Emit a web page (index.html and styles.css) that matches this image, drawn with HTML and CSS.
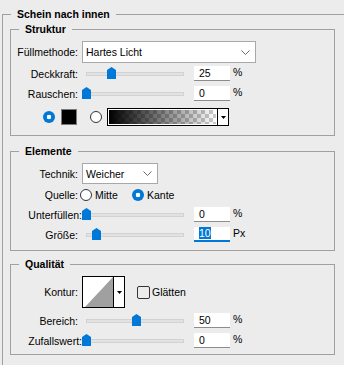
FILE: index.html
```html
<!DOCTYPE html>
<html lang="de">
<head>
  <meta charset="UTF-8">
  <title>Schein nach innen</title>
  <link rel="stylesheet" href="styles.css">
</head>
<body>
  <fieldset class="group outer">
    <legend>Schein nach innen</legend>

    <fieldset class="group inner struktur">
      <legend>Struktur</legend>
      <div class="row h22">
        <span class="lbl">Füllmethode:</span>
        <div class="select mode">
          <span>Hartes Licht</span>
          <svg class="chev" width="9" height="5" viewBox="0 0 9 5"><polyline points="0.5,0.5 4.5,4.5 8.5,0.5" fill="none" stroke="#6a6a6a"/></svg>
        </div>
      </div>
      <div class="row h15 mt3">
        <span class="lbl">Deckkraft:</span>
        <div class="slider"><div class="track"></div><svg class="thumb" style="left:25px" width="9" height="12" viewBox="0 0 9 12"><polygon points="0,3 4.5,0 9,3 9,12 0,12" fill="#0078d7"/></svg></div>
        <div class="num">25</div>
        <span class="unit">%</span>
      </div>
      <div class="row h15 mt5">
        <span class="lbl">Rauschen:</span>
        <div class="slider"><div class="track"></div><svg class="thumb" style="left:0px" width="9" height="12" viewBox="0 0 9 12"><polygon points="0,3 4.5,0 9,3 9,12 0,12" fill="#0078d7"/></svg></div>
        <div class="num">0</div>
        <span class="unit">%</span>
      </div>
      <div class="row colors mt7">
        <span class="radio on"></span>
        <span class="swatch"></span>
        <span class="radio second"></span>
        <div class="grad">
          <div class="grad-fill"></div>
          <div class="drop"><svg width="5" height="3" viewBox="0 0 5 3"><polygon points="0,0 5,0 2.5,3" fill="#000"/></svg></div>
        </div>
      </div>
    </fieldset>

    <fieldset class="group inner elemente">
      <legend>Elemente</legend>
      <div class="row h21">
        <span class="lbl">Technik:</span>
        <div class="select tech">
          <span>Weicher</span>
          <svg class="chev" width="9" height="5" viewBox="0 0 9 5"><polyline points="0.5,0.5 4.5,4.5 8.5,0.5" fill="none" stroke="#6a6a6a"/></svg>
        </div>
      </div>
      <div class="row h13 mt4">
        <span class="lbl tight">Quelle:</span>
        <label class="opt"><span class="radio"></span><span>Mitte</span></label>
        <label class="opt"><span class="radio on"></span><span>Kante</span></label>
      </div>
      <div class="row h15 mt6">
        <span class="lbl long">Unterfüllen:</span>
        <div class="slider"><div class="track"></div><svg class="thumb" style="left:0px" width="9" height="12" viewBox="0 0 9 12"><polygon points="0,3 4.5,0 9,3 9,12 0,12" fill="#0078d7"/></svg></div>
        <div class="num">0</div>
        <span class="unit">%</span>
      </div>
      <div class="row h15 mt5">
        <span class="lbl">Größe:</span>
        <div class="slider"><div class="track"></div><svg class="thumb" style="left:10px" width="9" height="12" viewBox="0 0 9 12"><polygon points="0,3 4.5,0 9,3 9,12 0,12" fill="#0078d7"/></svg></div>
        <div class="num focus"><span class="sel">10</span></div>
        <span class="unit">Px</span>
      </div>
    </fieldset>

    <fieldset class="group inner qualitaet">
      <legend>Qualität</legend>
      <div class="row h32">
        <span class="lbl">Kontur:</span>
        <div class="curve">
          <svg class="curve-graph" width="30" height="30" viewBox="0 0 30 30"><polygon points="2,30 30,0 30,30" fill="#a0a0a0"/></svg>
          <div class="drop"><svg width="5" height="3" viewBox="0 0 5 3"><polygon points="0,0 5,0 2.5,3" fill="#000"/></svg></div>
        </div>
        <span class="check"></span>
        <span class="check-text">Glätten</span>
      </div>
      <div class="row h15 mt5">
        <span class="lbl">Bereich:</span>
        <div class="slider"><div class="track"></div><svg class="thumb" style="left:50px" width="9" height="12" viewBox="0 0 9 12"><polygon points="0,3 4.5,0 9,3 9,12 0,12" fill="#0078d7"/></svg></div>
        <div class="num">50</div>
        <span class="unit">%</span>
      </div>
      <div class="row h15 mt5">
        <span class="lbl long">Zufallswert:</span>
        <div class="slider"><div class="track"></div><svg class="thumb" style="left:0px" width="9" height="12" viewBox="0 0 9 12"><polygon points="0,3 4.5,0 9,3 9,12 0,12" fill="#0078d7"/></svg></div>
        <div class="num">0</div>
        <span class="unit">%</span>
      </div>
    </fieldset>
  </fieldset>
</body>
</html>
```

FILE: styles.css
```css
body {
  margin: 0;
  height: 365px;
  background: #ececec;
  font-family: "Liberation Sans", Arial, sans-serif;
  font-size: 10.5px;
  color: #000;
}
.group {
  border: 1px solid #a0a0a0;
  margin: 0;
  padding: 0;
  min-width: 0;
}
legend {
  font-weight: bold;
  line-height: 15px;
  padding: 0 6px;
  margin-left: 8px;
}
.outer {
  box-sizing: border-box;
  width: 342px;
  height: 358px;
  margin: 7px 0 0 2px;
  border-right: none;
  border-bottom: none;
}
.inner {
  width: 325px;
  box-sizing: border-box;
  margin-left: 7px;
}
.struktur {
  padding: 4px 0 9px;
}
.elemente {
  margin-top: 8px;
  padding: 4px 0 8px;
}
.qualitaet {
  margin-top: 6px;
  padding: 4px 0 6px;
}
.row {
  display: flex;
  align-items: center;
}
.h13 { height: 13px; }
.h15 { height: 15px; }
.h21 { height: 21px; }
.h22 { height: 22px; }
.h32 { height: 32px; }
.mt3 { margin-top: 3px; }
.mt4 { margin-top: 4px; }
.mt5 { margin-top: 5px; }
.mt6 { margin-top: 6px; }
.mt7 { margin-top: 7px; }
.lbl {
  flex: none;
  width: 67px;
  margin-right: 4px;
  text-align: right;
  white-space: nowrap;
}
.lbl.long {
  width: 71px;
  margin-right: 0;
}
.lbl.tight {
  margin-right: 2px;
}
.select {
  box-sizing: border-box;
  display: flex;
  align-items: center;
  justify-content: space-between;
  background: #fff;
  border: 1px solid #a8a8a8;
  padding: 0 5px 0 3px;
}
.select.mode {
  width: 174px;
  height: 22px;
}
.select.tech {
  width: 76px;
  height: 21px;
}
.slider {
  position: relative;
  flex: none;
  width: 108px;
  height: 15px;
  margin-right: 4px;
}
.track {
  position: absolute;
  left: 4px;
  top: 6px;
  width: 98px;
  height: 4px;
  box-sizing: border-box;
  background: #e2e2e2;
  border: 1px solid #d2d2d2;
}
.thumb {
  position: absolute;
  top: 1px;
}
.num {
  flex: none;
  box-sizing: border-box;
  width: 36px;
  height: 15px;
  padding-left: 5px;
  line-height: 14px;
  background: #fff;
  border-bottom: 1px solid #8c8c8c;
}
.num.focus {
  border-bottom: 2px solid #0078d7;
  line-height: 13px;
}
.sel {
  background: #0078d7;
  color: #fff;
}
.unit {
  align-self: flex-start;
  margin-left: 3px;
  line-height: 12px;
}
.radio {
  flex: none;
  box-sizing: border-box;
  width: 12px;
  height: 12px;
  border-radius: 50%;
  border: 1px solid #333;
  background: #fff;
}
.radio.on {
  border: none;
  background: radial-gradient(circle, #fff 0 2px, #0078d7 2.6px);
}
.colors {
  height: 18px;
  padding-left: 32px;
}
.swatch {
  box-sizing: border-box;
  width: 16px;
  height: 16px;
  margin-left: 6px;
  background: #000;
  border: 1px solid #7a7a7a;
}
.radio.second {
  margin-left: 13px;
}
.grad {
  box-sizing: border-box;
  display: flex;
  width: 122px;
  height: 18px;
  margin-left: 5px;
  background: #fff;
  border: 1px solid #000;
}
.grad-fill {
  flex: 1;
  margin: 1px;
  background:
    linear-gradient(to right, #000, rgba(0, 0, 0, 0)),
    conic-gradient(#cbcbcb 25%, #fff 0 50%, #cbcbcb 0 75%, #fff 0) 0 0 / 8px 8px;
}
.drop {
  display: flex;
  align-items: center;
  justify-content: center;
  width: 10px;
  border-left: 1px solid #000;
  background: #fff;
}
.opt {
  display: flex;
  align-items: center;
  gap: 3px;
  width: 52px;
}
.curve {
  box-sizing: border-box;
  display: flex;
  width: 43px;
  height: 32px;
  background: #fff;
  border: 1px solid #000;
}
.curve-graph {
  width: 30px;
  height: 30px;
}
.check {
  box-sizing: border-box;
  width: 13px;
  height: 13px;
  margin-left: 12px;
  border: 1px solid #333;
  border-radius: 2px;
}
.check-text {
  margin-left: 2px;
}
```
